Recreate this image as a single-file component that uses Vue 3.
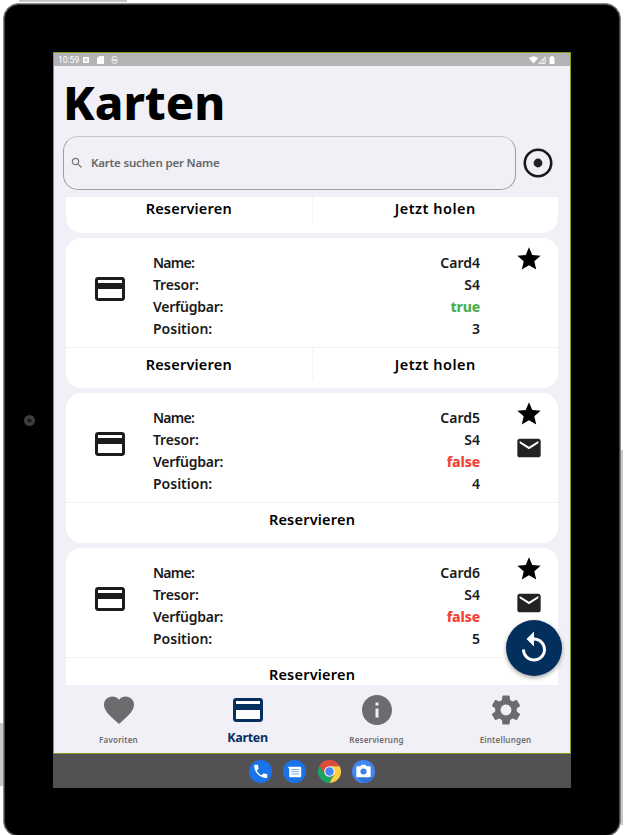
<script setup>
const cards = [
  { name: 'Card4', safe: 'S4', free: true, pos: 3 },
  { name: 'Card5', safe: 'S4', free: false, pos: 4 },
  { name: 'Card6', safe: 'S4', free: false, pos: 5 },
]
const cardPath = 'M20 4H4c-1.11 0-1.99.89-1.99 2L2 18c0 1.11.89 2 2 2h16c1.11 0 2-.89 2-2V6c0-1.11-.89-2-2-2zm0 14H4v-6h16v6zm0-10H4V6h16v2z'
const tabs = [
  { label: 'Favoriten', path: 'M12 21.35l-1.45-1.32C5.4 15.36 2 12.28 2 8.5 2 5.42 4.42 3 7.5 3c1.74 0 3.41.81 4.5 2.09C13.09 3.81 14.76 3 16.5 3 19.58 3 22 5.42 22 8.5c0 3.78-3.4 6.86-8.55 11.54L12 21.35z' },
  { label: 'Karten', path: cardPath, active: true },
  { label: 'Reservierung', path: 'M12 2C6.48 2 2 6.48 2 12s4.48 10 10 10 10-4.48 10-10S17.52 2 12 2zm1 15h-2v-6h2v6zm0-8h-2V7h2v2z' },
  { label: 'Eintellungen', path: 'M19.14 12.94c.04-.3.06-.61.06-.94 0-.32-.02-.64-.07-.94l2.03-1.58c.18-.14.23-.41.12-.61l-1.92-3.32c-.12-.22-.37-.29-.59-.22l-2.39.96c-.5-.38-1.03-.7-1.62-.94l-.36-2.54c-.04-.24-.24-.41-.48-.41h-3.84c-.24 0-.43.17-.47.41l-.36 2.54c-.59.24-1.13.57-1.62.94l-2.39-.96c-.22-.08-.47 0-.59.22L2.74 8.87c-.12.21-.08.47.12.61l2.03 1.58c-.05.3-.09.63-.09.94s.02.64.07.94l-2.03 1.58c-.18.14-.23.41-.12.61l1.92 3.32c.12.22.37.29.59.22l2.39-.96c.5.38 1.03.7 1.62.94l.36 2.54c.05.24.24.41.48.41h3.84c.24 0 .44-.17.47-.41l.36-2.54c.59-.24 1.13-.56 1.62-.94l2.39.96c.22.08.47 0 .59-.22l1.92-3.32c.12-.22.07-.47-.12-.61l-2.01-1.58zM12 15.6c-1.98 0-3.6-1.62-3.6-3.6s1.62-3.6 3.6-3.6 3.6 1.62 3.6 3.6-1.62 3.6-3.6 3.6z' },
]
</script>

<template>
  <div class="stage">
    <i class="key key-top"></i>
    <i class="key key-left"></i>
    <i class="key key-right"></i>
    <div class="device">
      <i class="camera"></i>
      <div class="screen">
        <div class="app">
          <div class="status">
            <span class="clock">10:59</span>
            <svg class="s-app" viewBox="0 0 7 7"><rect width="7" height="7" rx="1" fill="#fff" /><path d="M2 5.2 3.5 1.8 5 5.2M2.6 4.2h1.8" fill="none" stroke="#aaa" stroke-width=".8" /></svg>
            <svg class="s-sd" viewBox="0 0 7 8"><path d="M2.3 0H7v8H0V2.3z" fill="#fff" /></svg>
            <svg class="s-sync" viewBox="0 0 7 8"><path d="M6 2.3C5.8 0 1 0 1 2.3S6 3.8 6 5.7 1.2 8 1 5.7M.5 4h6" fill="none" stroke="#fff" stroke-width="1" /></svg>
            <span class="grow"></span>
            <svg class="s-wifi" viewBox="0 0 9 8"><path d="M0 2.3C2.5-.2 6.5-.2 9 2.3L4.5 7.6z" fill="#fff" /></svg>
            <svg class="s-cell" viewBox="0 0 8 8"><path d="M.8 7.4 7.2.9v6.5zM5 7V3.2" fill="none" stroke="#fff" stroke-width=".9" /></svg>
            <svg class="s-bat" viewBox="0 0 6 8"><path d="M2 0h2v1h1.5v7H.5V1H2z" fill="#fff" /></svg>
          </div>
          <h1 class="title">Karten</h1>
          <div class="search-row">
            <div class="search">
              <svg class="mag" viewBox="0 0 24 24"><path fill="#777" d="M15.5 14h-.79l-.28-.27C15.41 12.59 16 11.11 16 9.5 16 5.91 13.09 3 9.5 3S3 5.91 3 9.5 5.91 16 9.5 16c1.61 0 3.09-.59 4.23-1.57l.27.28v.79l5 4.99L20.49 19l-4.99-5zm-6 0C7.01 14 5 11.99 5 9.5S7.01 5 9.5 5 14 7.01 14 9.5 11.99 14 9.5 14z" /></svg>
              <span class="placeholder">Karte suchen per Name</span>
            </div>
            <svg class="target" viewBox="0 0 30 30"><circle cx="15" cy="15" r="13.2" fill="none" stroke="#191919" stroke-width="2.6" /><circle cx="15" cy="15" r="4.4" fill="#222" /></svg>
          </div>
          <div class="list">
            <div class="card card-cut">
              <div class="actions"><span class="act"><b>Reservieren</b></span><i class="split"></i><span class="act"><b class="fetch">Jetzt holen</b></span></div>
            </div>
            <div v-for="c in cards" :key="c.name" class="card">
              <div class="info">
                <svg class="card-icon" viewBox="0 0 24 24"><path :d="cardPath" fill="#1c1c1c" /></svg>
                <dl class="rows">
                  <div class="row"><dt class="k-name">Name:</dt><dd>{{ c.name }}</dd></div>
                  <div class="row"><dt class="k-safe">Tresor:</dt><dd>{{ c.safe }}</dd></div>
                  <div class="row"><dt class="k-free">Verfügbar:</dt><dd :class="c.free ? 'yes' : 'no'">{{ c.free }}</dd></div>
                  <div class="row"><dt>Position:</dt><dd>{{ c.pos }}</dd></div>
                </dl>
                <div class="marks">
                  <svg class="mark" viewBox="0 0 24 24"><path fill="#000" d="M12 17.27L18.18 21l-1.64-7.03L22 9.24l-7.19-.61L12 2 9.19 8.63 2 9.24l5.46 4.73L5.82 21z" /></svg>
                  <svg v-if="!c.free" class="mark" viewBox="0 0 24 24"><path fill="#222" d="M20 4H4c-1.1 0-1.99.9-1.99 2L2 18c0 1.1.9 2 2 2h16c1.1 0 2-.9 2-2V6c0-1.1-.9-2-2-2zm0 4l-8 5-8-5V6l8 5 8-5v2z" /></svg>
                </div>
              </div>
              <div class="actions">
                <span class="act"><b>Reservieren</b></span>
                <template v-if="c.free"><i class="split"></i><span class="act"><b class="fetch">Jetzt holen</b></span></template>
              </div>
            </div>
          </div>
          <nav class="tabs">
            <div v-for="t in tabs" :key="t.label" class="tab" :class="{ active: t.active }">
              <svg class="tab-icon" viewBox="0 0 24 24"><path :d="t.path" fill="currentColor" /><path v-if="t.active" d="M4 6h16v2H4zM4 12h16v6H4z" fill="#fff" /></svg>
              <span class="tab-label">{{ t.label }}</span>
            </div>
          </nav>
          <div class="fab">
            <svg viewBox="0 0 24 24"><path fill="#fff" d="M12 5V1L7 6l5 5V7c3.31 0 6 2.69 6 6s-2.69 6-6 6-6-2.69-6-6H4c0 4.42 3.58 8 8 8s8-3.58 8-8-3.58-8-8-8z" /></svg>
          </div>
        </div>
        <div class="dock">
          <svg viewBox="0 0 24 24"><circle cx="12" cy="12" r="12" fill="#1a73e8" /><path fill="#fff" transform="translate(3.1 2.8) scale(.76)" d="M6.62 10.79c1.44 2.83 3.76 5.14 6.59 6.59l2.2-2.2c.27-.27.67-.36 1.02-.24 1.12.37 2.33.57 3.57.57.55 0 1 .45 1 1V20c0 .55-.45 1-1 1-9.39 0-17-7.61-17-17 0-.55.45-1 1-1h3.5c.55 0 1 .45 1 1 0 1.25.2 2.45.57 3.57.11.35.03.74-.25 1.02l-2.2 2.2z" /></svg>
          <svg viewBox="0 0 24 24"><circle cx="12" cy="12" r="12" fill="#1a73e8" /><path fill="#fff" d="M5 7h13a1 1 0 0 1 1 1v9a1 1 0 0 1-1 1H7.5a1 1 0 0 1-1-1V9z" /><path d="M8.5 10h8.5M8.5 12.3h8.5M8.5 14.6h8.5" stroke="#8ab4f0" stroke-width="1.2" /></svg>
          <svg viewBox="0 0 24 24"><path fill="#db4c3f" d="M12 6.5h10.7L22.4 6a12 12 0 0 0-20.8 0l5.6 9z" /><path fill="#1da261" d="M1.6 6 7.2 15 12 17.5h4.8L12 24A12 12 0 0 1 1.6 6z" /><path fill="#ffcd40" d="M12 6.5h10.7A12 12 0 0 1 12 24l4.8-9z" /><circle cx="12" cy="12" r="5.6" fill="#f4f4f4" /><circle cx="12" cy="12" r="4.4" fill="#4587f3" /></svg>
          <svg viewBox="0 0 24 24"><circle cx="12" cy="12" r="12" fill="#4285f4" /><path fill="#3271d4" d="m19.5 17 2 2.3A12 12 0 0 1 12 24l-7-6z" /><path fill="#fff" d="M5.5 6.5H9l1-1.5h4l1 1.5h3.5a1 1 0 0 1 1 1V17a1 1 0 0 1-1 1h-13a1 1 0 0 1-1-1V7.5a1 1 0 0 1 1-1z" /><circle cx="12" cy="12" r="3.2" fill="#3d80ee" /></svg>
        </div>
      </div>
    </div>
  </div>
</template>

<style>
body { background: #fff; overflow: hidden; }
</style>

<style scoped>
.stage { position: relative; width: 624px; height: 835px; overflow: hidden; padding: 3px 0 0 3px; box-sizing: border-box; font-family: "Noto Sans", sans-serif; color: #000; }
.key { position: absolute; background: #c8c8c8; }
.key-top { left: 19px; top: 0; width: 108px; height: 2px; }
.key-left { left: 0; top: 723px; width: 3px; height: 63px; }
.key-right { left: 621px; top: 450px; width: 2px; height: 375px; }
.device { position: relative; width: 618px; height: 834px; box-sizing: border-box; padding: 48px 0 0 49px; background: #000; border: 1px solid #888; border-radius: 16px; box-shadow: inset 0 0 0 1px #444; }
.camera { position: absolute; left: 20px; top: 411px; width: 11px; height: 11px; border-radius: 50%; background: radial-gradient(#181818 0 15%, #404040 35%, #3c3c3c 65%); }
.screen { width: 518px; height: 736px; display: flex; flex-direction: column; }
.app { position: relative; height: 702px; box-sizing: border-box; border: 1px solid #7d9c20; background: #f1f0f6; display: flex; flex-direction: column; }
.status { height: 13px; flex: none; background: #b4b3b6; display: flex; align-items: center; padding: 0 15px 0 4px; color: #fff; }
.clock { font: 8.5px/14px Roboto, sans-serif; width: 25px; padding-top: 1px; }
.s-app { width: 6px; height: 6px; }
.s-sd { width: 7px; height: 8px; margin-left: 8px; }
.s-sync { width: 7px; height: 8px; margin-left: 7px; }
.grow { flex: 1; }
.s-wifi { width: 9px; height: 8px; }
.s-cell { width: 8px; height: 8px; }
.s-bat { width: 6px; height: 8px; margin-left: 3px; }
.title { margin: 0 0 0 9px; height: 70px; flex: none; font-size: 47px; line-height: 73px; font-weight: 800; }
.search-row { display: flex; align-items: center; height: 54px; flex: none; padding-left: 9px; gap: 7px; }
.search { width: 453px; height: 54px; box-sizing: border-box; border: 1px solid #9e9da3; border-top-color: #c6c5ca; border-radius: 15px; display: flex; align-items: center; padding-left: 6px; gap: 7px; }
.mag { width: 14px; height: 14px; }
.placeholder { font-size: 11.5px; line-height: 16px; font-weight: 600; letter-spacing: -.18px; color: #666; }
.target { width: 30px; height: 30px; }
.list { margin-top: 7px; height: 488px; flex: none; overflow: hidden; padding: 0 12px; display: flex; flex-direction: column; gap: 5px; }
.card { height: 150px; flex: none; background: #fff; border-radius: 15px; overflow: hidden; }
.card-cut { height: 36px; border-radius: 0 0 15px 15px; }
.card-cut .actions { margin-top: -6px; border-color: transparent; }
.info { height: 109px; display: flex; align-items: flex-start; }
.card-icon { width: 36px; height: 36px; margin: 32.500px 25.500px 0 25.500px; flex: none; }
.rows { margin: 14.400px 0 0; width: 327px; flex: none; font-size: 14px; font-weight: 600; color: #191919; }
.row { display: flex; justify-content: space-between; height: 21.8px; line-height: 22px; }
.row dd { margin: 0; }
.row .yes { color: #4caf50; font-weight: 800; letter-spacing: -.2px; }
.row .no { color: #f44336; font-weight: 800; letter-spacing: -.15px; }
.k-name { letter-spacing: -.75px; }
.k-safe { letter-spacing: -.15px; }
.k-free { letter-spacing: -.25px; }
.marks { margin: 7px 0 0 34.600px; display: flex; flex-direction: column; gap: 6px; }
.mark { width: 28px; height: 28px; display: block; }
.actions { height: 41px; box-sizing: border-box; border-top: 1px solid #f2f2f4; display: flex; }
.act { flex: 1; text-align: center; font-size: 14.5px; line-height: 32px; }
.act b { font-weight: 600; letter-spacing: .2px; }
.act .fetch { letter-spacing: .5px; }
.split { width: 1px; height: 32px; background: #f4f4f6; }
.tabs { height: 68px; display: flex; }
.tab { flex: 1; display: flex; flex-direction: column; align-items: center; color: #6c6c6e; }
.tab-icon { width: 36px; height: 36px; margin-top: 6.500px; }
.tab-label { font-size: 8px; line-height: 12px; font-weight: 600; margin-top: 6.500px; letter-spacing: .2px; }
.active { color: #052f5f; }
.active .tab-label { font-size: 12.5px; font-weight: 700; line-height: 16px; margin-top: 2px; letter-spacing: -.3px; }
.fab { position: absolute; left: 451.500px; top: 567px; width: 56px; height: 56px; border-radius: 50%; background: #022f5c; box-shadow: 0 2px 4px rgba(0,0,0,.35); display: flex; align-items: center; justify-content: center; }
.fab svg { width: 36px; height: 36px; }
.dock { height: 34px; background: #525254; display: flex; align-items: center; justify-content: center; gap: 11.5px; }
.dock svg { width: 23px; height: 23px; }
</style>
